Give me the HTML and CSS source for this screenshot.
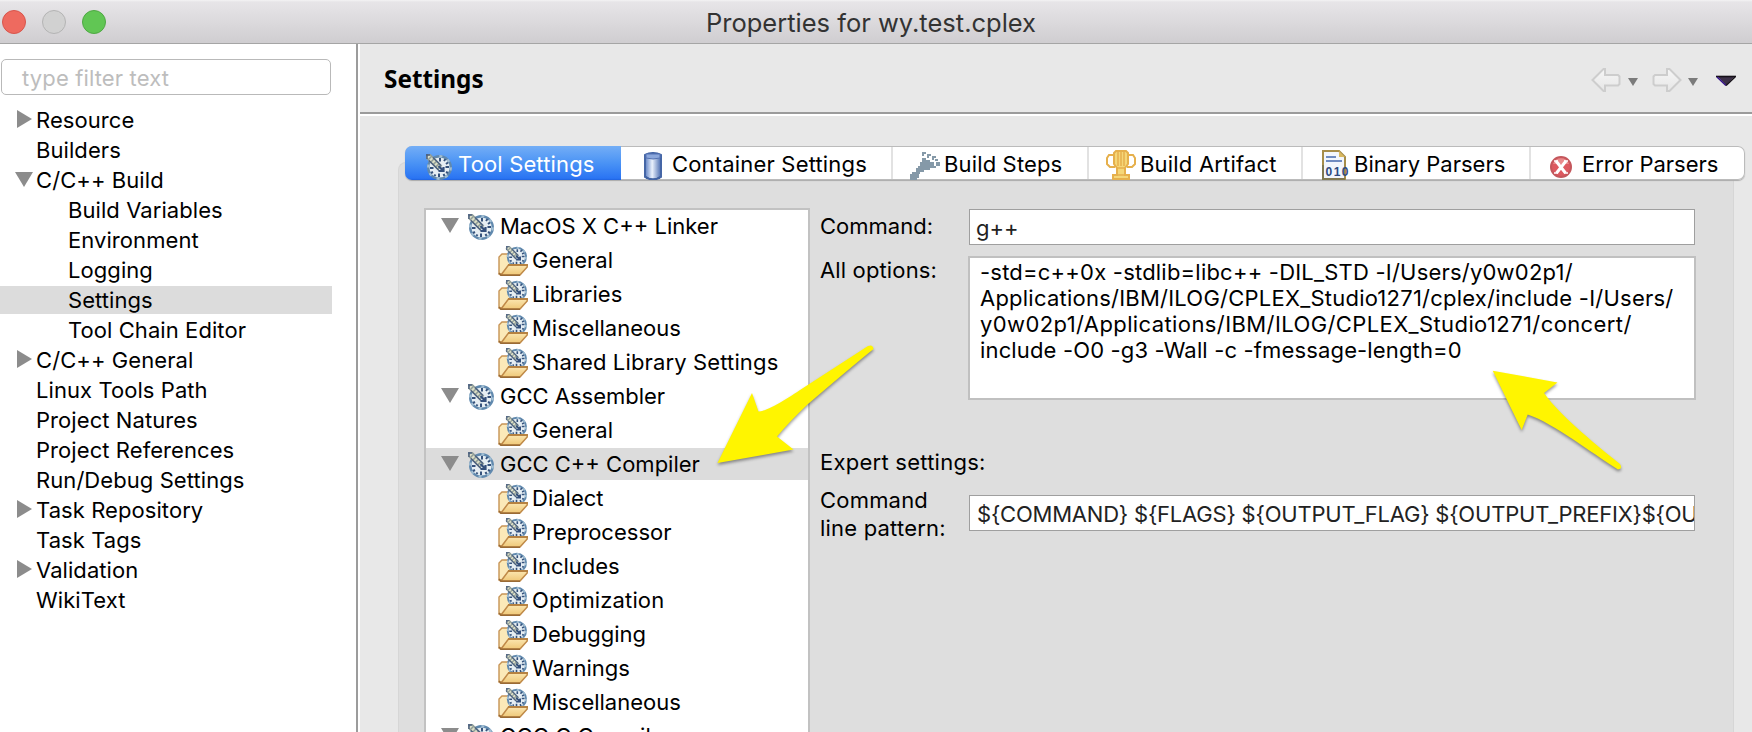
FILE: index.html
```html
<!DOCTYPE html>
<html lang="en">
<head>
<meta charset="utf-8">
<title>Properties for wy.test.cplex</title>
<link rel="stylesheet" href="styles.css">
</head>
<body>
<svg class="defs" width="0" height="0">
  <defs>
    <linearGradient id="gFolder" x1="0" y1="0" x2="0" y2="1"><stop offset="0" stop-color="#fbe6b0"/><stop offset="1" stop-color="#efc878"/></linearGradient>
    <linearGradient id="gCyl" x1="0" y1="0" x2="1" y2="0"><stop offset="0" stop-color="#5b7ec2"/><stop offset=".45" stop-color="#eaf1fc"/><stop offset="1" stop-color="#4a6cb0"/></linearGradient>
    <linearGradient id="gNav" x1="0" y1="0" x2="0" y2="1"><stop offset="0" stop-color="#f6f6f6"/><stop offset="1" stop-color="#e6e6e6"/></linearGradient>
    <symbol id="clock" viewBox="0 0 26 26">
      <circle cx="13.500" cy="13.500" r="11.300" fill="#e6eef3" stroke="#6089ae" stroke-width="2.400"/>
      <circle cx="13.500" cy="13.500" r="11.300" fill="none" stroke="#a3bfd3" stroke-width="2.200" stroke-dasharray="3 5.800"/>
      <path d="M13 19.500v3.500M14 4v3.500M19.500 13h3.500M4 14h3.500M18 7l1.500-2M20 10l2-1.500M20 18l2 1M17.500 20l1 2M7 18l-2 1M9.500 20.500l-1 1.500" stroke="#35527c" stroke-width="2"/>
      <path d="M1 1L14 14" stroke="#8f9c98" stroke-width="6.500"/>
      <path d="M2 2L13 13" stroke="#dcdfc6" stroke-width="3.500" stroke-dasharray="2 1.500"/>
      <path d="M0 1h4M1 0v5M3 6.500L13 16.500M7 3.500L15 11.500" stroke="#4b607f" stroke-width="1.400"/>
      <path d="M12.500 12l5 5M12.500 17h5v-4" stroke="#34507c" stroke-width="2.200" fill="none"/>
    </symbol>
    <symbol id="folder" viewBox="0 0 30 30">
      <path d="M1 28V11L4 8H10L12 12V28Z" fill="#fbe9b8" stroke="#c79455" stroke-width="1.400"/>
      <svg x="7.500" y="0" width="22" height="21"><use href="#clock" width="22" height="21"/></svg>
      <path d="M3 29L10.500 19H29.200V21L22 29Z" fill="url(#gFolder)" stroke="#c08a48" stroke-width="1.500"/>
      <path d="M10 19H30" stroke="#b57f3e" stroke-width="1.800"/>
      <path d="M1 27L3 29.200H22" stroke="#996a35" stroke-width="1.500" fill="none"/>
    </symbol>
    <symbol id="down" viewBox="0 0 18 15"><path d="M0 0H18L9 15Z" fill="#8c8c8c"/></symbol>
    <symbol id="right" viewBox="0 0 15 18"><path d="M0 0V18L15 9Z" fill="#8c8c8c"/></symbol>
  </defs>
</svg>
<div class="window">
  <header class="titlebar">
    <div class="lights"><i class="light red"></i><i class="light gray"></i><i class="light green"></i></div>
    <h1 class="title">Properties for wy.test.cplex</h1>
  </header>
  <div class="body">
    <aside class="sidebar">
      <div class="filter"><span class="filter-text">type filter text</span></div>
      <ul class="nav">
        <li class="item"><svg class="tw-right"><use href="#right"/></svg><span>Resource</span></li>
        <li class="item"><span>Builders</span></li>
        <li class="item"><svg class="tw-down"><use href="#down"/></svg><span>C/C++ Build</span></li>
        <li class="item sub"><span>Build Variables</span></li>
        <li class="item sub"><span>Environment</span></li>
        <li class="item sub"><span>Logging</span></li>
        <li class="item sub selected"><span>Settings</span></li>
        <li class="item sub"><span>Tool Chain Editor</span></li>
        <li class="item"><svg class="tw-right"><use href="#right"/></svg><span>C/C++ General</span></li>
        <li class="item"><span>Linux Tools Path</span></li>
        <li class="item"><span>Project Natures</span></li>
        <li class="item"><span>Project References</span></li>
        <li class="item"><span>Run/Debug Settings</span></li>
        <li class="item"><svg class="tw-right"><use href="#right"/></svg><span>Task Repository</span></li>
        <li class="item"><span>Task Tags</span></li>
        <li class="item"><svg class="tw-right"><use href="#right"/></svg><span>Validation</span></li>
        <li class="item"><span>WikiText</span></li>
      </ul>
    </aside>
    <main class="main">
      <div class="page-head">
        <h2 class="page-title">Settings</h2>
        <svg class="history" width="146" height="24" viewBox="0 0 146 24">
          <path d="M1.500 12L12.500 1H14V7H27L28.500 8.500V16L27 17.500H14V23H12.500Z" fill="url(#gNav)" stroke="#cdcdcd" stroke-width="2"/>
          <path d="M37 10H47L42 18Z" fill="#7b7b7b"/>
          <path d="M89.500 12L78.500 1H76V7H64L62.500 8.500V16L64 17.500H76V23H78.500Z" fill="url(#gNav)" stroke="#cdcdcd" stroke-width="2"/>
          <path d="M97 10H107L102 18Z" fill="#7b7b7b"/>
          <path d="M126 8H144L135 17Z" fill="#3c3048"/>
          <path d="M125 8.500H145" stroke="#151018" stroke-width="1.600"/><path d="M126 9L135 17.500" stroke="#331185" stroke-width="1.600"/><path d="M144 9L135 17.500" stroke="#151018" stroke-width="1.600"/>
        </svg>
      </div>
      <div class="content">
        <nav class="tabs">
          <div class="tab active t1"><svg class="ic-clock"><use href="#clock"/></svg><span>Tool Settings</span></div>
          <div class="tab t2">
            <svg width="20" height="28" viewBox="0 0 20 28"><path d="M2 3Q10-1 18 3V25Q10 30 2 25Z" fill="url(#gCyl)" stroke="#4566a6" stroke-width="2"/><path d="M3 2H17V6Q10 8 3 6Z" fill="#8ca8dc" stroke="#5573b3"/><path d="M3 24Q10 29 17 24V27H3Z" fill="#4263a2"/></svg>
            <span>Container Settings</span></div>
          <div class="tab t3">
            <svg width="30" height="28" viewBox="0 0 30 28" fill="#8599a8"><path d="M12 6h4v2h4v2h4v4h2v2h-6v2h-6v2h-4v2h-2v-2h-2v-4h2v-2h2v-4h2z"/><path d="M0 22h2v-2h6v2h1v4H7v2H0zM12 0h4v2h-2v2h-2zM17 2h4v2h-2v2h-2zM22 4h4v2h-2v2h-2zM25 7h3v2h-3zM26 10h4v4h-4z"/></svg>
            <span>Build Steps</span></div>
          <div class="tab t4">
            <svg width="30" height="30" viewBox="0 0 30 30"><path d="M8 5H3L1 8V14L4 17H9M22 5H27L29 8V14L26 17H21" fill="none" stroke="#e6b04c" stroke-width="2"/><path d="M8 3L10 1H20L22 3V14L19 18V25H23V29H7V25H11V18L8 14Z" fill="#f5d778" stroke="#e6b04c" stroke-width="2"/><path d="M12 2V16M15 2V16M18 2V16M11 18H19M11 25H19" stroke="#e6b04c" stroke-width="1.500"/></svg>
            <span>Build Artifact</span></div>
          <div class="tab t5">
            <svg width="28" height="30" viewBox="0 0 28 30"><path d="M1 1H17L23 7V29H1Z" fill="#f2f6fc" stroke="#a68d4a" stroke-width="2"/><path d="M1 15V29H23" fill="none" stroke="#807850" stroke-width="2"/><path d="M17 1V7H23Z" fill="#d9b860"/><path d="M4 7H14M4 11H20" stroke="#6f8bc0" stroke-width="2"/><text class="bits" x="3.500" y="26" textLength="23">010</text></svg>
            <span>Binary Parsers</span></div>
          <div class="tab t6">
            <svg width="22" height="22" viewBox="0 0 22 22"><circle cx="11" cy="11" r="10" fill="#dd5960" stroke="#c4575c" stroke-width="2"/><path d="M3 8A8.500 8.500 0 0 1 19 8Z" fill="#e98a8c"/><path d="M6 5L15.500 17M16 5L6.500 17" stroke="#fff" stroke-width="3"/><path d="M4 5h4M14 5h4M4 17h4M14 17h4" stroke="#fff" stroke-width="1.500"/></svg>
            <span>Error Parsers</span></div>
        </nav>
        <div class="panel">
          <ul class="tools">
            <li class="tool"><svg class="tw-down"><use href="#down"/></svg><svg class="ic-clock"><use href="#clock"/></svg><span>MacOS X C++ Linker</span></li>
            <li class="tool leaf"><svg class="ic-folder"><use href="#folder"/></svg><span>General</span></li>
            <li class="tool leaf"><svg class="ic-folder"><use href="#folder"/></svg><span>Libraries</span></li>
            <li class="tool leaf"><svg class="ic-folder"><use href="#folder"/></svg><span>Miscellaneous</span></li>
            <li class="tool leaf"><svg class="ic-folder"><use href="#folder"/></svg><span class="wide">Shared Library Settings</span></li>
            <li class="tool"><svg class="tw-down"><use href="#down"/></svg><svg class="ic-clock"><use href="#clock"/></svg><span>GCC Assembler</span></li>
            <li class="tool leaf"><svg class="ic-folder"><use href="#folder"/></svg><span>General</span></li>
            <li class="tool selected"><svg class="tw-down"><use href="#down"/></svg><svg class="ic-clock"><use href="#clock"/></svg><span>GCC C++ Compiler</span></li>
            <li class="tool leaf"><svg class="ic-folder"><use href="#folder"/></svg><span>Dialect</span></li>
            <li class="tool leaf"><svg class="ic-folder"><use href="#folder"/></svg><span>Preprocessor</span></li>
            <li class="tool leaf"><svg class="ic-folder"><use href="#folder"/></svg><span>Includes</span></li>
            <li class="tool leaf"><svg class="ic-folder"><use href="#folder"/></svg><span class="wide">Optimization</span></li>
            <li class="tool leaf"><svg class="ic-folder"><use href="#folder"/></svg><span>Debugging</span></li>
            <li class="tool leaf"><svg class="ic-folder"><use href="#folder"/></svg><span>Warnings</span></li>
            <li class="tool leaf"><svg class="ic-folder"><use href="#folder"/></svg><span>Miscellaneous</span></li>
            <li class="tool last"><svg class="tw-down"><use href="#down"/></svg><svg class="ic-clock"><use href="#clock"/></svg><span>GCC C Compiler</span></li>
          </ul>
          <div class="form">
            <div class="row command"><label class="label">Command:</label><div class="input">g++</div></div>
            <div class="row options"><label class="label wide">All options:</label>
              <div class="area">
                <div class="line-1">-std=c++0x -stdlib=libc++ -DIL_STD -I/Users/y0w02p1/</div>
                <div class="line-2">Applications/IBM/ILOG/CPLEX_Studio1271/cplex/include -I/Users/</div>
                <div class="line-3">y0w02p1/Applications/IBM/ILOG/CPLEX_Studio1271/concert/</div>
                <div class="line-4">include -O0 -g3 -Wall -c -fmessage-length=0</div>
              </div></div>
            <div class="expert">Expert settings:</div>
            <div class="row pattern"><label class="label">Command<br>line pattern:</label><div class="input">${COMMAND} ${FLAGS} ${OUTPUT_FLAG} ${OUTPUT_PREFIX}${OU</div></div>
          </div>
        </div>
      </div>
    </main>
  </div>
  <svg class="marks" width="1752" height="732" viewBox="0 0 1752 732" fill="#fff500">
    <path d="M717.500 463L752 393L758.500 411.500C768 411 785 400 800 390L868 346Q873 344 873.500 349Q850 368 808 404Q790 421 777 436.500L793.500 449.500Z"/>
    <path d="M1492.700 370.700L1557.500 382.500L1544 393C1555 409 1580 432 1620 464Q1623 469 1618 469.500C1590 452 1555 424 1527.700 414.500L1521.700 430Z"/>
  </svg>
</div>
</body>
</html>
```
FILE: styles.css
```css
* { box-sizing: border-box; }
body {
  margin: 0;
  font-family: Inter, "Liberation Sans", sans-serif;
  font-size: 22px;
  color: #000;
}
h1, h2, ul { margin: 0; padding: 0; }
ul { list-style: none; }
svg { display: block; flex: none; }
.defs { position: absolute; }
span, label { white-space: nowrap; }

.window {
  position: relative;
  width: 1752px;
  height: 732px;
  overflow: hidden;
  display: flex;
  flex-direction: column;
  background: #e8e8e8;
}
.titlebar {
  height: 44px;
  flex: none;
  display: grid;
  grid-template-columns: 120px 1fr 130px;
  align-items: center;
  background: linear-gradient(#f4f3f4 0, #e7e5e8 2px, #d0ced1 42px);
  border-bottom: 1px solid #a5a5a5;
}
.lights { display: flex; gap: 16px; padding-left: 2px; }
.light { width: 24px; height: 24px; border-radius: 50%; border: 1px solid; }
.red { background: #ee6a5f; border-color: #d8554c; }
.gray { background: #d1d1d1; border-color: #b4b4b4; }
.green { background: #61c654; border-color: #4fa844; }
.title {
  font-size: 25.5px;
  font-weight: 400;
  line-height: 42px;
  text-align: center;
  color: #333;
  padding-top: 2px;
}

.body { flex: 1; min-height: 0; display: flex; }
.sidebar {
  width: 358px;
  flex: none;
  background: #fff;
  border-right: 2px solid #9c9c9c;
  padding-top: 15px;
}
.filter {
  width: 330px;
  height: 36px;
  margin-left: 1px;
  padding-left: 20px;
  border: 1px solid #b9b9b9;
  border-radius: 5px;
  color: #bdbdbd;
  font-size: 22px;
  letter-spacing: .14px;
  line-height: 37px;
}
.nav { display: flex; flex-direction: column; gap: 2px; padding-top: 11px; letter-spacing: .07px; }
.item {
  width: 332px;
  height: 28px;
  display: flex;
  padding-left: 36px;
  line-height: 28px;
}
.item.sub { padding-left: 68px; }
.selected { background: #dcdcdc; }
.tw-right { width: 15px; height: 18px; margin: 4px 4px 0 -19px; }
.tw-down { width: 18px; height: 15px; margin: 6px 3px 0 -21px; }

.main {
  flex: 1;
  min-width: 0;
  border-left: 2px solid #fff;
  display: flex;
  flex-direction: column;
}
.page-head {
  height: 72px;
  flex: none;
  display: flex;
  justify-content: space-between;
  padding: 24px 15px 0 24px;
  border-bottom: 2px solid #fff;
  box-shadow: inset 0 -2px #9b9b9b;
}
.page-title {
  font-family: "Noto Sans", sans-serif;
  font-size: 24.3px;
  font-weight: 700;
  line-height: 30px;
  margin-top: -4px;
}

.content { flex: 1; min-height: 0; display: flex; flex-direction: column; padding: 30px 0 0 38px; }
.tabs {
  position: relative;
  width: 1340px;
  height: 34px;
  margin-left: 7px;
  flex: none;
  display: flex;
  background: #fff;
  border-radius: 7px;
  box-shadow: inset 0 0 0 1px #bbb, 0 1px 1px #aaa;
}
.tab { display: flex; line-height: 34px; border-right: 2px solid #e2e2e2; height: 32px; margin-top: 1px; }
.t1 {
  width: 216px;
  height: 34px;
  margin-top: 0;
  padding-left: 21px;
  border: 0;
  border-radius: 7px 0 0 7px;
  color: #fff;
  letter-spacing: .15px;
  background: linear-gradient(#74aef6, #4a93f5 50%, #2a74f3 95%, #1f62df);
}
.t1 .ic-clock { margin: 8px 6px 0 0; }
.t1 span { margin-top: 1px; }
.t2 { width: 272px; padding-left: 22px; letter-spacing: .18px; }
.t2 svg { margin: 5px 9px 0 0; }
.t3 { width: 196px; padding-left: 17px; letter-spacing: .15px; }
.t3 svg { margin: 5px 4px 0 0; }
.t4 { width: 214px; padding-left: 17px; letter-spacing: .2px; }
.t4 svg { margin: 3px 4px 0 0; }
.t5 { width: 228px; padding-left: 19px; }
.t5 svg { margin: 3px 4px 0 0; }
.t6 { width: 213px; padding-left: 19px; border: 0; }
.t6 svg { margin: 9px 10px 0 0; }
.bits { font: 700 12px "Liberation Sans", sans-serif; fill: #2e4a80; }
.ic-clock { width: 26px; height: 26px; }
.ic-folder { width: 30px; height: 30px; margin: 2px 4px 0 0; }

.panel {
  width: 1336px;
  flex: 1;
  min-height: 0;
  margin-top: -18px;
  padding: 45px 0 0 25px;
  display: flex;
  background: #dedede;
  border: 1px solid #d6d6d6;
  border-bottom: 0;
  border-radius: 8px 0 0 0;
}
.tools {
  width: 386px;
  flex: none;
  background: #fff;
  border: 2px solid #c2c2c2;
  border-bottom: 0;
  display: flex;
  flex-direction: column;
  gap: 2px;
  overflow: hidden;
}
.tool { height: 32px; flex: none; display: flex; line-height: 33px; padding-left: 37px; }
.tool .tw-down { margin: 8px 9px 0 -22px; }
.tool .ic-clock { margin: 4px 6px 0 0; }
.tool.leaf { padding-left: 72px; }
.tool.last { letter-spacing: .1px; }
.wide { letter-spacing: .14px; }

.form { flex: 1; min-width: 0; padding: 1px 0 0 10px; }
.row { display: flex; }
.label { width: 149px; flex: none; line-height: 28px; }
.input {
  width: 726px;
  height: 36px;
  padding: 0 2px 0 6px;
  background: #fff;
  border: 1px solid #9f9f9f;
  color: #222;
  line-height: 37px;
  white-space: nowrap;
  overflow: hidden;
}
.command .label { margin-top: 3px; }
.options { margin-top: 11px; }
.options .label { width: 148px; }
.area {
  width: 728px;
  height: 144px;
  border: 2px solid #c0c0c0;
  background: #fff;
  padding: 1px 0 0 10px;
  line-height: 26px;
  white-space: nowrap;
}
.line-1 { letter-spacing: .21px; }
.line-2 { letter-spacing: .23px; }
.line-3 { letter-spacing: .4px; }
.line-4 { letter-spacing: .15px; }
.expert { line-height: 28px; margin-top: 48px; letter-spacing: .25px; }
.pattern { margin-top: 10px; }
.pattern .label { letter-spacing: .2px; }
.pattern .input { margin-top: 9px; padding-left: 7px; letter-spacing: -.21px; }

.marks { position: absolute; left: 0; top: 0; filter: drop-shadow(0 2px 1.5px rgba(0, 0, 0, .4)); }
```
